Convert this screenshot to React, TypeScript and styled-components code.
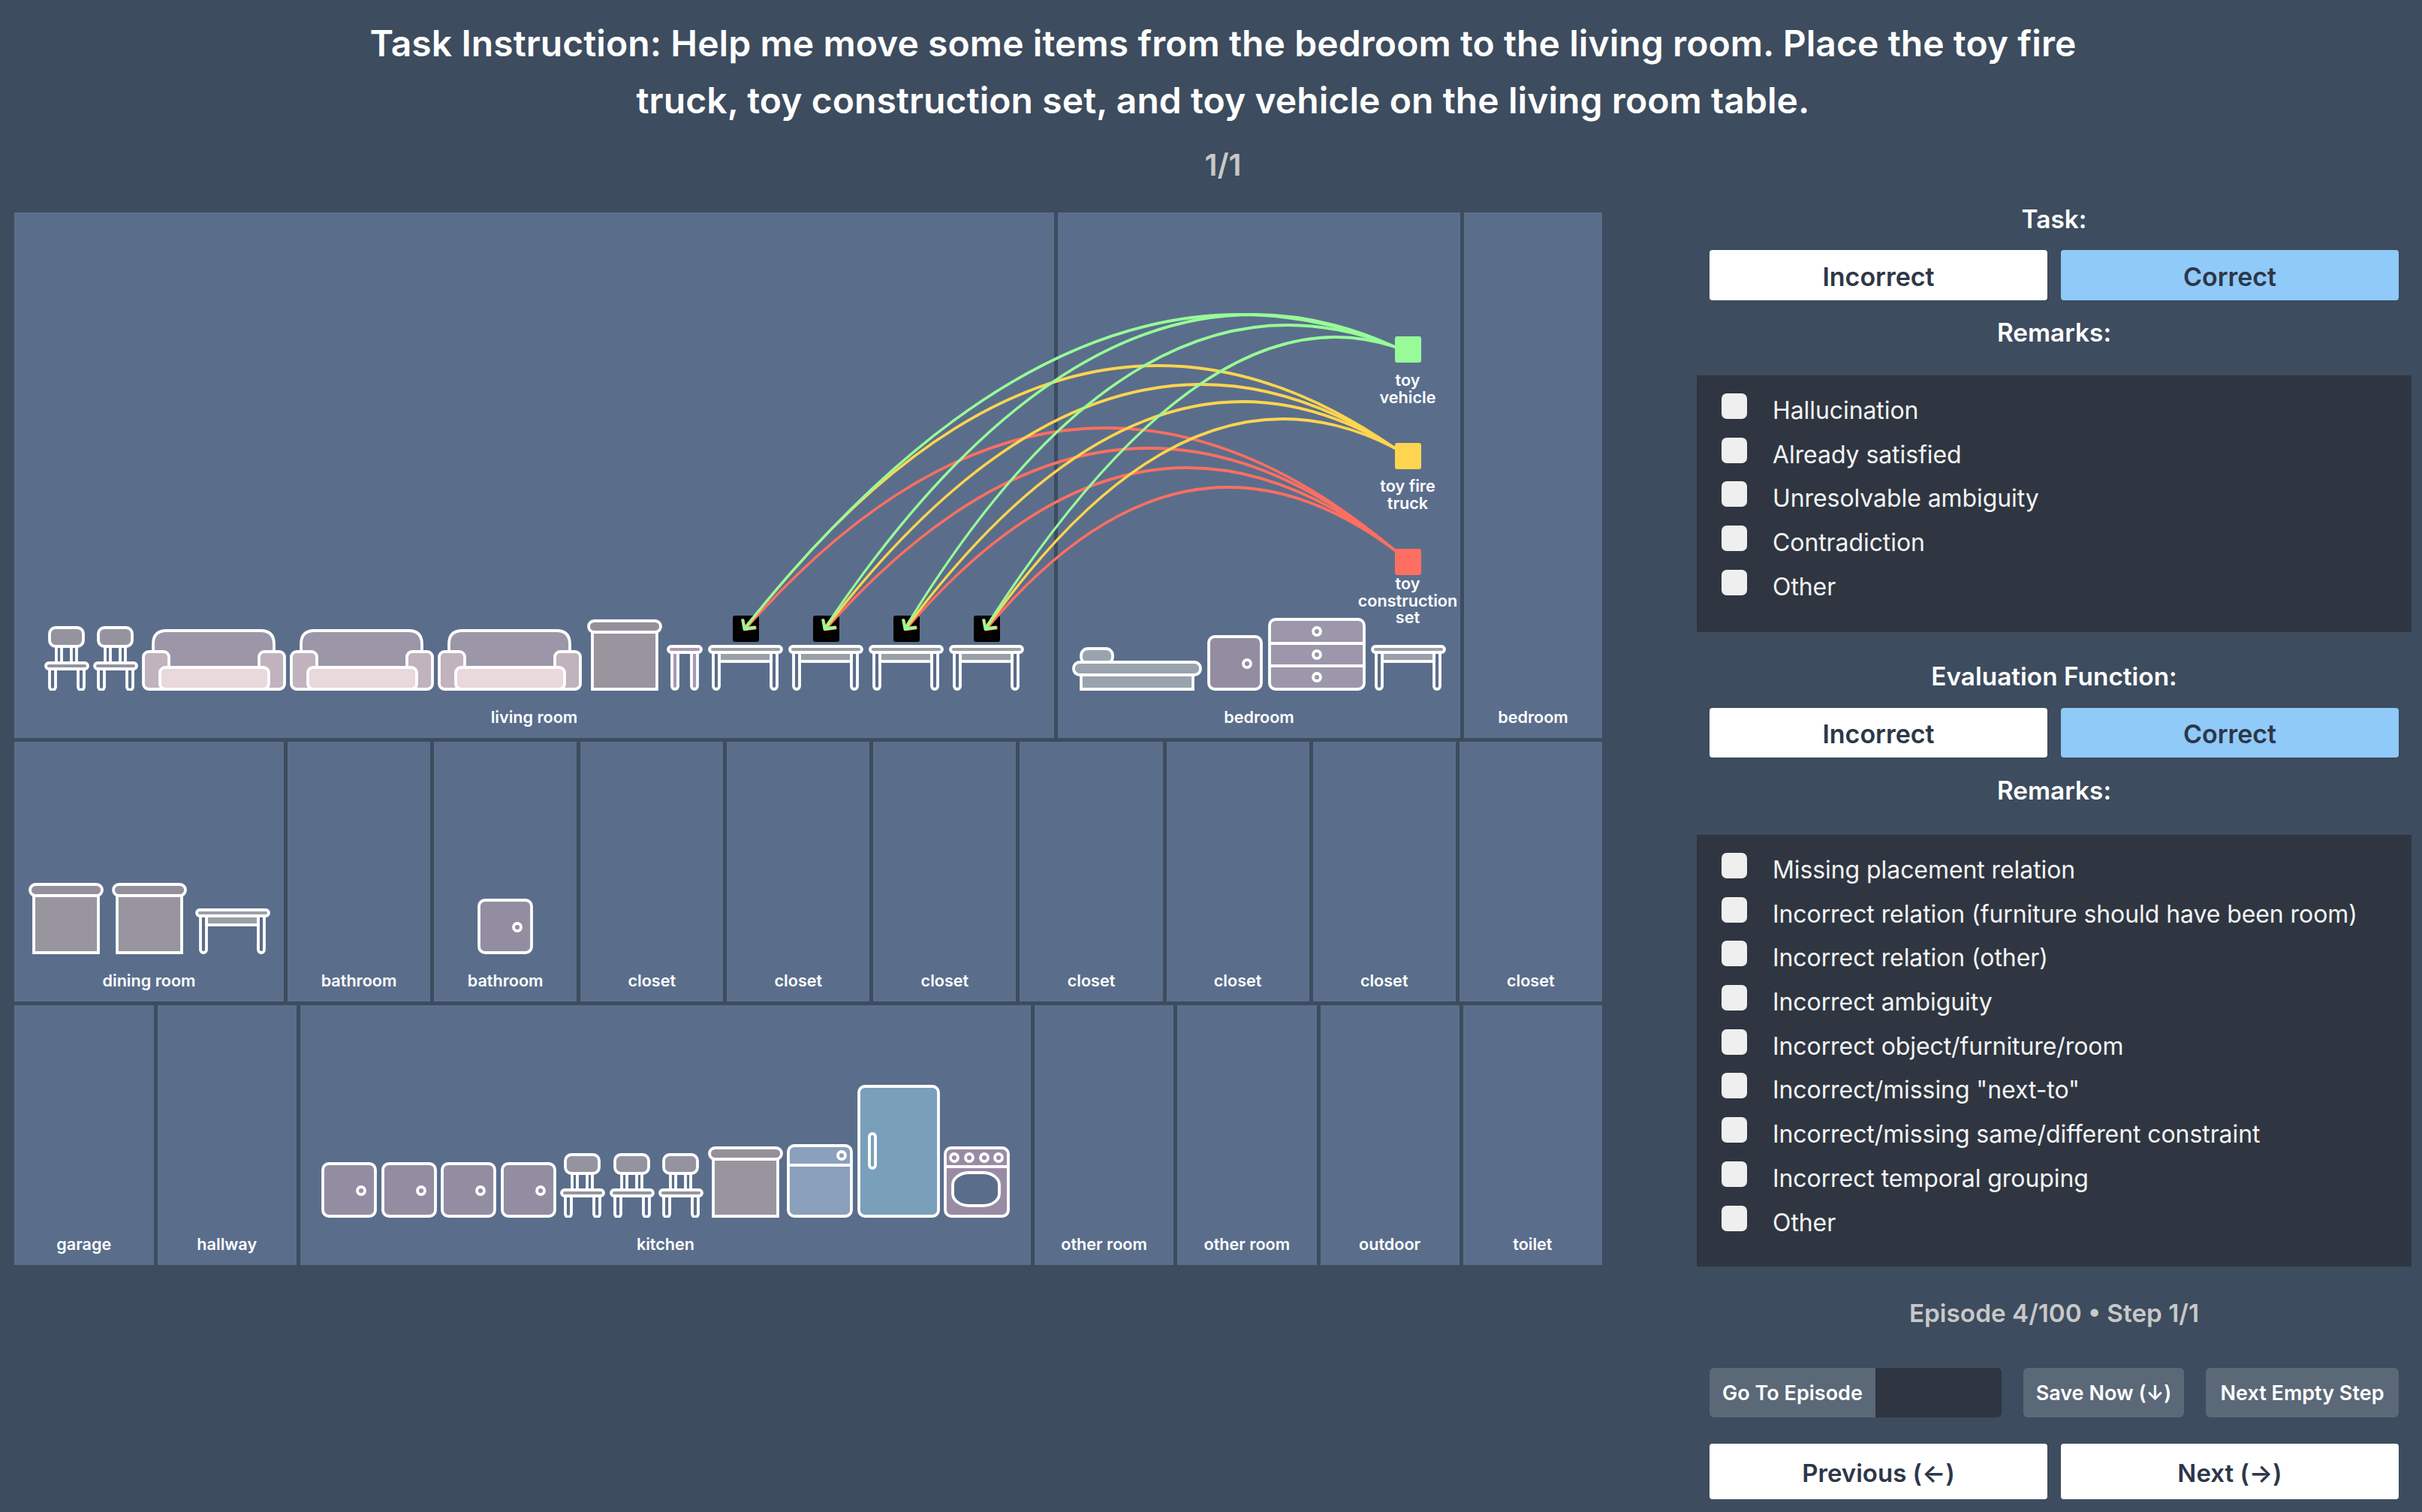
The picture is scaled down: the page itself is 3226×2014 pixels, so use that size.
import React from 'react';
import styled, { createGlobalStyle } from 'styled-components';

const ROOM_BG = '#5a6e8c';

const GlobalStyle = createGlobalStyle`
  html, body {
    margin: 0;
    padding: 0;
    background: #3d4c5e;
    overflow: hidden;
  }
  body {
    font-family: Inter, "Liberation Sans", sans-serif;
  }
`;

const Page = styled.div`
  width: 3226px;
  height: 2014px;
  overflow: hidden;
  background: #3d4c5e;
  color: #fff;
`;

const Header = styled.header`
  padding: 20px 0 0 32px;
  height: 283px;
  box-sizing: border-box;
  text-align: center;
`;

const Title = styled.h1`
  margin: 0;
  font-size: 48px;
  font-weight: 600;
  line-height: 76px;
  letter-spacing: 0.08px;
`;

const Counter = styled.div`
  margin-top: 24px;
  font-size: 40px;
  font-weight: 600;
  line-height: 48px;
  color: #c8c8c8;
`;

const Main = styled.div`
  display: flex;
  align-items: flex-start;
  padding-left: 19px;
`;

const Canvas = styled.div`
  position: relative;
  width: 2115px;
  display: flex;
  flex-direction: column;
  gap: 5px;
`;

const RoomRow = styled.div<{ $columns: string; $height: number }>`
  display: grid;
  grid-template-columns: ${(p) => p.$columns};
  gap: 5px;
  height: ${(p) => p.$height}px;
`;

const Room = styled.div`
  position: relative;
  background: ${ROOM_BG};
  display: flex;
  flex-direction: column;
  justify-content: flex-end;
  align-items: center;
  padding-bottom: 17px;
  box-sizing: border-box;
`;

const Furniture = styled.div<{ $gap: number }>`
  display: flex;
  justify-content: center;
  align-items: flex-end;
  gap: ${(p) => p.$gap}px;
`;

const RoomLabel = styled.div`
  margin-top: 24px;
  font-size: 21.6px;
  font-weight: 600;
  line-height: 22px;
  color: #fff;
  text-align: center;
  white-space: nowrap;
`;

const TableStack = styled.div`
  display: flex;
  flex-direction: column;
  align-items: center;
  gap: 4px;
`;

const Placed = styled.div`
  width: 35px;
  height: 35px;
  border-radius: 3px;
  background: #000;
`;

const ToyMarker = styled.div<{ $top: number }>`
  position: absolute;
  left: 396px;
  top: ${(p) => p.$top}px;
  width: 140px;
  display: flex;
  flex-direction: column;
  align-items: center;
`;

const ToySquare = styled.div<{ $color: string }>`
  width: 35px;
  height: 35px;
  border-radius: 3px;
  background: ${(p) => p.$color};
`;

const ToyName = styled.div<{ $gap: number }>`
  margin-top: ${(p) => p.$gap}px;
  font-size: 21.6px;
  font-weight: 600;
  line-height: 22.5px;
  text-align: center;
`;

const ArcLayer = styled.svg`
  position: absolute;
  left: 0;
  top: 0;
  pointer-events: none;
`;

const Panel = styled.aside`
  width: 952px;
  margin-left: 126px;
  margin-top: -20px;
  display: flex;
  flex-direction: column;
  align-items: stretch;
`;

const SectionLabel = styled.div<{ $top: number }>`
  margin-top: ${(p) => p.$top}px;
  height: 40px;
  font-size: 33.4px;
  font-weight: 600;
  line-height: 40px;
  text-align: center;
`;

const ButtonPair = styled.div<{ $top: number; $height: number }>`
  display: grid;
  grid-template-columns: 450px 450px;
  gap: 18px;
  justify-content: center;
  margin-top: ${(p) => p.$top}px;
  height: ${(p) => p.$height}px;
`;

const ChoiceButton = styled.button<{ $active?: boolean; $size?: number }>`
  border: 0;
  border-radius: 4px;
  padding: 3px 0 0;
  font-family: inherit;
  font-size: ${(p) => p.$size ?? 34}px;
  font-weight: 600;
  color: #2d3748;
  background: ${(p) => (p.$active ? '#90caf9' : '#fff')};
`;

const RemarkBox = styled.div<{ $top: number; $height: number }>`
  margin-top: ${(p) => p.$top}px;
  height: ${(p) => p.$height}px;
  box-sizing: border-box;
  padding: 24px 0 0 33px;
  background: #2f3641;
  display: flex;
  flex-direction: column;
`;

const RemarkRow = styled.label`
  display: flex;
  align-items: flex-start;
  height: 58.7px;
`;

const Check = styled.span`
  width: 34px;
  height: 34px;
  border-radius: 7px;
  background: #efefef;
  flex: none;
`;

const RemarkText = styled.span`
  margin-left: 34px;
  padding-top: 1px;
  font-size: 32px;
  font-weight: 400;
  line-height: 44px;
  letter-spacing: -0.08px;
  color: #f4f4f4;
`;

const EpisodeInfo = styled.div`
  margin-top: 40px;
  height: 44px;
  font-size: 33.3px;
  font-weight: 600;
  line-height: 44px;
  text-align: center;
  color: #c8c8c8;
`;

const ToolRow = styled.div`
  margin: 51px 17px 0;
  display: flex;
  height: 66px;
`;

const ToolButton = styled.button`
  border: 0;
  border-radius: 6px;
  padding: 0;
  font-family: inherit;
  font-size: 27px;
  font-weight: 600;
  color: #fff;
  background: #5a6878;
`;

const GoToButton = styled(ToolButton)`
  width: 221px;
  border-radius: 6px 0 0 6px;
`;

const EpisodeInput = styled.div`
  width: 168px;
  height: 66px;
  background: #2f3641;
  border-radius: 0 6px 6px 0;
`;

const SaveButton = styled(ToolButton)`
  width: 214px;
  margin-left: 29px;
`;

const NextEmptyButton = styled(ToolButton)`
  width: 257px;
  margin-left: 29px;
`;

const stroke = { stroke: '#fff', strokeWidth: 3.8 };

const Chair = () => (
  <svg width={60} height={86} viewBox="0 0 60 86" fill="none">
    <g {...stroke}>
      <rect x={16} y={26} width={7} height={24} />
      <rect x={36} y={26} width={7} height={24} />
      <path d="M7 56V81a4 4 0 0 0 8 0V56zM45 56V81a4 4 0 0 0 8 0V56z" />
      <rect x={7} y={2} width={45} height={25} rx={8} fill="#95939f" />
      <rect x={2} y={49} width={56} height={8} rx={4} fill="#95939f" />
    </g>
  </svg>
);

const Sofa = () => (
  <svg width={192} height={82} viewBox="0 0 192 82" fill="none">
    <g {...stroke}>
      <path d="M15 60V20Q15 2 33 2H158Q176 2 176 20V60z" fill="#9b97a8" />
      <rect x={2} y={30} width={34} height={50} rx={7} fill="#c0b3bd" />
      <rect x={156} y={30} width={34} height={50} rx={7} fill="#c0b3bd" />
      <rect x={24} y={51} width={145} height={29} rx={7} fill="#e9d8dc" />
    </g>
  </svg>
);

const Cabinet = () => (
  <svg width={100} height={95} viewBox="0 0 100 95" fill="none">
    <g {...stroke}>
      <path d="M7 16V93H93V16" fill="#98959f" />
      <rect x={2} y={2} width={96} height={15} rx={7.5} fill="#94909b" />
    </g>
  </svg>
);

const Table = () => (
  <svg width={100} height={61} viewBox="0 0 100 61" fill="none">
    <g {...stroke}>
      <rect x={15} y={9} width={69} height={13} fill="#9aa0a5" />
      <path d="M7 10V55a4 4 0 0 0 8 0V10zM84 10V55a4 4 0 0 0 8 0V10z" />
      <rect x={2} y={2} width={96} height={8} rx={4} fill="#9aa0a5" />
    </g>
  </svg>
);

const Stool = () => (
  <svg width={48} height={61} viewBox="0 0 48 61" fill="none">
    <g {...stroke}>
      <path d="M7 10V55a4 4 0 0 0 8 0V10zM33 10V55a4 4 0 0 0 8 0V10z" fill="#a79ab5" />
      <rect x={2} y={2} width={44} height={8} rx={4} fill="#a79ab5" />
    </g>
  </svg>
);

const Bed = () => (
  <svg width={173} height={58} viewBox="0 0 173 58" fill="none">
    <g {...stroke}>
      <path d="M12 36V56H161V36" fill="#98a3ae" />
      <rect x={12} y={2} width={42} height={20} rx={9} fill="#98a3ae" />
      <rect x={2} y={20} width={169} height={17} rx={8} fill="#98a3ae" />
    </g>
  </svg>
);

const DoorCabinet = () => (
  <svg width={74} height={74} viewBox="0 0 74 74" fill="none">
    <g {...stroke}>
      <rect x={2} y={2} width={70} height={70} rx={8} fill="#938da2" />
      <circle cx={53} cy={38} r={5} />
    </g>
  </svg>
);

const Dresser = () => (
  <svg width={130} height={97} viewBox="0 0 130 97" fill="none">
    <g {...stroke}>
      <rect x={2} y={2} width={126} height={93} rx={8} fill="#9c97aa" />
      <path d="M2 34H128M2 64H128" />
      <circle cx={65} cy={18} r={5} />
      <circle cx={65} cy={49} r={5} />
      <circle cx={65} cy={79} r={5} />
    </g>
  </svg>
);

const Dishwasher = () => (
  <svg width={88} height={98} viewBox="0 0 88 98" fill="none">
    <g {...stroke}>
      <rect x={2} y={2} width={84} height={94} rx={8} fill="#8aa0bc" />
      <path d="M2 28H86" />
      <circle cx={73} cy={15} r={5} />
    </g>
  </svg>
);

const Fridge = () => (
  <svg width={110} height={177} viewBox="0 0 110 177" fill="none">
    <g {...stroke}>
      <rect x={2} y={2} width={106} height={173} rx={8} fill="#7a9fba" />
      <rect x={16} y={65} width={8} height={46} rx={4} />
    </g>
  </svg>
);

const Washer = () => (
  <svg width={88} height={95} viewBox="0 0 88 95" fill="none">
    <g {...stroke}>
      <rect x={2} y={2} width={84} height={91} rx={8} fill="#9a8ba5" />
      <path d="M2 27H86" />
      <circle cx={14} cy={15} r={5} />
      <circle cx={34} cy={15} r={5} />
      <circle cx={54} cy={15} r={5} />
      <circle cx={73} cy={15} r={5} />
      <rect x={12} y={35} width={62} height={44} rx={22} ry={16} fill={ROOM_BG} />
    </g>
  </svg>
);

const TARGETS = [991, 1098, 1205, 1312];

// each arc: start of the toy, then the top of the curve per target
const ARC_GROUPS = [
  {
    color: '#ff6f61',
    startY: 733,
    shift: 1.5,
    tops: [[1473, 570], [1530, 597], [1581, 623], [1636, 649]],
  },
  {
    color: '#ffd54f',
    startY: 597,
    shift: 0.7,
    tops: [[1543, 487], [1600, 512], [1655, 535], [1709, 558]],
  },
  {
    color: '#98fb98',
    startY: 462,
    shift: 0,
    tops: [[1651, 419], [1670, 419], [1715, 433], [1779, 449]],
  },
];

// the arcs are thicker where they run flat, so they are drawn in a squeezed x scale
const X_SCALE = 0.75;
const sx = (x: number) => (x / X_SCALE).toFixed(1);

const arcPath = (startY: number, endX: number, endY: number, topX: number, topY: number) => {
  const startX = 1858;
  const cy = topY - Math.sqrt((topY - startY) * (topY - endY));
  const t = (startY - cy) / (startY + endY - 2 * cy);
  const cx = (topX - (1 - t) * (1 - t) * startX - t * t * endX) / (2 * t * (1 - t));
  return `M${sx(startX)} ${startY}Q${sx(cx)} ${cy.toFixed(1)} ${sx(endX)} ${endY}`;
};

const Arcs = () => (
  <ArcLayer
    width={2115}
    height={1403}
    viewBox="19 283 2115 1403"
    fill="none"
    strokeWidth={3.8}
  >
    <g transform={`scale(${X_SCALE} 1)`}>
      {ARC_GROUPS.map((group) =>
        group.tops.map(([topX, topY], i) => {
          const x = TARGETS[i] + group.shift;
          const y = 837.5 + group.shift / 2;
          return (
            <g key={`${group.color}${i}`} stroke={group.color}>
              <path d={arcPath(group.startY, x, y, topX, topY)} />
              <path d={`M${sx(x - 2.5)} ${y - 13}L${sx(x)} ${y}L${sx(x + 15)} ${y - 2}`} strokeWidth={4} />
            </g>
          );
        })
      )}
    </g>
  </ArcLayer>
);

const TableWithItem = () => (
  <TableStack>
    <Placed />
    <Table />
  </TableStack>
);

const EmptyRoom = ({ name }: { name: string }) => (
  <Room>
    <RoomLabel>{name}</RoomLabel>
  </Room>
);

const TASK_REMARKS = [
  'Hallucination',
  'Already satisfied',
  'Unresolvable ambiguity',
  'Contradiction',
  'Other',
];

const EVAL_REMARKS = [
  'Missing placement relation',
  'Incorrect relation (furniture should have been room)',
  'Incorrect relation (other)',
  'Incorrect ambiguity',
  'Incorrect object/furniture/room',
  'Incorrect/missing "next-to"',
  'Incorrect/missing same/different constraint',
  'Incorrect temporal grouping',
  'Other',
];

const Remarks = ({ items, top, height }: { items: string[]; top: number; height: number }) => (
  <RemarkBox $top={top} $height={height}>
    {items.map((item) => (
      <RemarkRow key={item}>
        <Check />
        <RemarkText>{item}</RemarkText>
      </RemarkRow>
    ))}
  </RemarkBox>
);

const App = () => {
  return (
    <Page>
      <GlobalStyle />
      <Header>
        <Title>
          Task Instruction: Help me move some items from the bedroom to the living room. Place the toy fire
          <br />
          truck, toy construction set, and toy vehicle on the living room table.
        </Title>
        <Counter>1/1</Counter>
      </Header>
      <Main>
        <Canvas>
          <RoomRow $columns="1385px 536px 184px" $height={700}>
            <Room>
              <Furniture $gap={6.5}>
                <Furniture $gap={5}>
                  <Chair />
                  <Chair />
                  <Sofa />
                  <Sofa />
                  <Sofa />
                </Furniture>
                <Cabinet />
                <Furniture $gap={7}>
                  <Stool />
                  <TableWithItem />
                  <TableWithItem />
                  <TableWithItem />
                  <TableWithItem />
                </Furniture>
              </Furniture>
              <RoomLabel>living room</RoomLabel>
            </Room>
            <Room>
              <ToyMarker $top={165}>
                <ToySquare $color="#98fb98" />
                <ToyName $gap={12}>
                  toy
                  <br />
                  vehicle
                </ToyName>
              </ToyMarker>
              <ToyMarker $top={307}>
                <ToySquare $color="#ffd54f" />
                <ToyName $gap={11}>
                  toy fire
                  <br />
                  truck
                </ToyName>
              </ToyMarker>
              <ToyMarker $top={448}>
                <ToySquare $color="#ff6f61" />
                <ToyName $gap={0}>
                  toy
                  <br />
                  construction
                  <br />
                  set
                </ToyName>
              </ToyMarker>
              <Furniture $gap={7}>
                <Bed />
                <DoorCabinet />
                <Dresser />
                <Table />
              </Furniture>
              <RoomLabel>bedroom</RoomLabel>
            </Room>
            <EmptyRoom name="bedroom" />
          </RoomRow>
          <RoomRow $columns="359px repeat(9, 190.1px)" $height={346}>
            <Room>
              <Furniture $gap={11}>
                <Cabinet />
                <Cabinet />
                <Table />
              </Furniture>
              <RoomLabel>dining room</RoomLabel>
            </Room>
            <EmptyRoom name="bathroom" />
            <Room>
              <Furniture $gap={6}>
                <DoorCabinet />
              </Furniture>
              <RoomLabel>bathroom</RoomLabel>
            </Room>
            {['c1', 'c2', 'c3', 'c4', 'c5', 'c6', 'c7'].map((id) => (
              <EmptyRoom key={id} name="closet" />
            ))}
          </RoomRow>
          <RoomRow $columns="185.5px 185.5px 973px repeat(4, 185.25px)" $height={346}>
            <EmptyRoom name="garage" />
            <EmptyRoom name="hallway" />
            <Room>
              <Furniture $gap={5.5}>
                <DoorCabinet />
                <DoorCabinet />
                <DoorCabinet />
                <DoorCabinet />
                <Chair />
                <Chair />
                <Chair />
                <Cabinet />
                <Dishwasher />
                <Fridge />
                <Washer />
              </Furniture>
              <RoomLabel>kitchen</RoomLabel>
            </Room>
            <EmptyRoom name="other room" />
            <EmptyRoom name="other room" />
            <EmptyRoom name="outdoor" />
            <EmptyRoom name="toilet" />
          </RoomRow>
          <Arcs />
        </Canvas>
        <Panel>
          <SectionLabel $top={9}>Task:</SectionLabel>
          <ButtonPair $top={21} $height={67}>
            <ChoiceButton>Incorrect</ChoiceButton>
            <ChoiceButton $active>Correct</ChoiceButton>
          </ButtonPair>
          <SectionLabel $top={23}>Remarks:</SectionLabel>
          <Remarks items={TASK_REMARKS} top={37} height={342} />
          <SectionLabel $top={39}>Evaluation Function:</SectionLabel>
          <ButtonPair $top={22} $height={66}>
            <ChoiceButton>Incorrect</ChoiceButton>
            <ChoiceButton $active>Correct</ChoiceButton>
          </ButtonPair>
          <SectionLabel $top={24}>Remarks:</SectionLabel>
          <Remarks items={EVAL_REMARKS} top={39} height={575} />
          <EpisodeInfo>Episode 4/100 • Step 1/1</EpisodeInfo>
          <ToolRow>
            <GoToButton>Go To Episode</GoToButton>
            <EpisodeInput />
            <SaveButton>Save Now (↓)</SaveButton>
            <NextEmptyButton>Next Empty Step</NextEmptyButton>
          </ToolRow>
          <ButtonPair $top={35} $height={74}>
            <ChoiceButton $size={33}>Previous (←)</ChoiceButton>
            <ChoiceButton $size={33}>Next (→)</ChoiceButton>
          </ButtonPair>
        </Panel>
      </Main>
    </Page>
  );
};

export default App;
